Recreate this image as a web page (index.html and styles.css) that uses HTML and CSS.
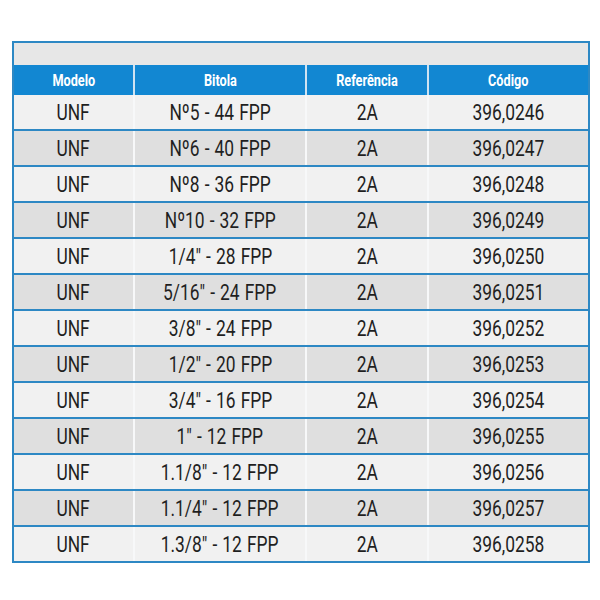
FILE: index.html
```html
<!DOCTYPE html>
<html>
<head>
<meta charset="utf-8">
<link rel="stylesheet" href="styles.css">
</head>
<body>
<div class="table">
  <div class="band"></div>
  <div class="row head">
    <div class="cell"><span>Modelo</span></div>
    <div class="cell"><span>Bitola</span></div>
    <div class="cell"><span>Referência</span></div>
    <div class="cell"><span>Código</span></div>
  </div>
  <div class="body">
    <div class="row light"><div class="cell"><span>UNF</span></div><div class="cell"><span>Nº5 - 44 FPP</span></div><div class="cell"><span>2A</span></div><div class="cell"><span>396,0246</span></div></div>
    <div class="row dark"><div class="cell"><span>UNF</span></div><div class="cell"><span>Nº6 - 40 FPP</span></div><div class="cell"><span>2A</span></div><div class="cell"><span>396,0247</span></div></div>
    <div class="row light"><div class="cell"><span>UNF</span></div><div class="cell"><span>Nº8 - 36 FPP</span></div><div class="cell"><span>2A</span></div><div class="cell"><span>396,0248</span></div></div>
    <div class="row dark"><div class="cell"><span>UNF</span></div><div class="cell"><span>Nº10 - 32 FPP</span></div><div class="cell"><span>2A</span></div><div class="cell"><span>396,0249</span></div></div>
    <div class="row light"><div class="cell"><span>UNF</span></div><div class="cell"><span>1/4" - 28 FPP</span></div><div class="cell"><span>2A</span></div><div class="cell"><span>396,0250</span></div></div>
    <div class="row dark"><div class="cell"><span>UNF</span></div><div class="cell"><span>5/16" - 24 FPP</span></div><div class="cell"><span>2A</span></div><div class="cell"><span>396,0251</span></div></div>
    <div class="row light"><div class="cell"><span>UNF</span></div><div class="cell"><span>3/8" - 24 FPP</span></div><div class="cell"><span>2A</span></div><div class="cell"><span>396,0252</span></div></div>
    <div class="row dark"><div class="cell"><span>UNF</span></div><div class="cell"><span>1/2" - 20 FPP</span></div><div class="cell"><span>2A</span></div><div class="cell"><span>396,0253</span></div></div>
    <div class="row light"><div class="cell"><span>UNF</span></div><div class="cell"><span>3/4" - 16 FPP</span></div><div class="cell"><span>2A</span></div><div class="cell"><span>396,0254</span></div></div>
    <div class="row dark"><div class="cell"><span>UNF</span></div><div class="cell"><span>1" - 12 FPP</span></div><div class="cell"><span>2A</span></div><div class="cell"><span>396,0255</span></div></div>
    <div class="row light"><div class="cell"><span>UNF</span></div><div class="cell"><span>1.1/8" - 12 FPP</span></div><div class="cell"><span>2A</span></div><div class="cell"><span>396,0256</span></div></div>
    <div class="row dark"><div class="cell"><span>UNF</span></div><div class="cell"><span>1.1/4" - 12 FPP</span></div><div class="cell"><span>2A</span></div><div class="cell"><span>396,0257</span></div></div>
    <div class="row light"><div class="cell"><span>UNF</span></div><div class="cell"><span>1.3/8" - 12 FPP</span></div><div class="cell"><span>2A</span></div><div class="cell"><span>396,0258</span></div></div>
  </div>
</div>
</body>
</html>
```
FILE: styles.css
```css
html, body {
  margin: 0;
  padding: 0;
  background: #ffffff;
}
body {
  padding: 41px 0 0 12px;
}
.table {
  width: 574px;
  border: 2px solid #2d88c4;
  display: flex;
  flex-direction: column;
}
.band {
  height: 22px;
  background: #e7e7e7;
}
.row {
  display: grid;
  grid-template-columns: 119px 170px 120px 159px;
  column-gap: 2px;
  background: #f7f8f9;
}
.cell {
  display: flex;
  align-items: center;
  justify-content: center;
  white-space: nowrap;
}
.cell span {
  display: inline-block;
  transform: scaleX(0.79);
}
.head {
  height: 30px;
  background: #cfe3f2;
}
.head .cell {
  background: #1287d2;
  color: #ffffff;
  font-family: Roboto, "Liberation Sans", sans-serif;
  font-weight: bold;
  font-size: 16.5px;
}
.head .cell span {
  transform: scaleX(0.77);
}
.body {
  display: flex;
  flex-direction: column;
  row-gap: 2px;
  background: #2d88c4;
}
.body .row {
  height: 34px;
}
.body .cell {
  font-family: Roboto, "Liberation Sans", sans-serif;
  font-size: 22px;
  word-spacing: 1px;
  color: #1f1f1f;
  padding-top: 1px;
  box-sizing: border-box;
}
.light .cell {
  background: #f1f1f1;
}
.dark .cell {
  background: #dfdfdf;
}
```
